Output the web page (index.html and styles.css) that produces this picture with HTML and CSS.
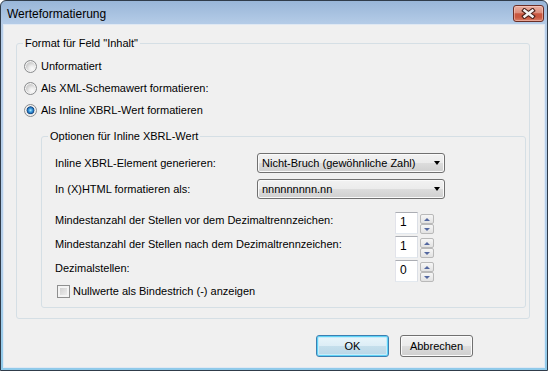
FILE: index.html
```html
<!DOCTYPE html>
<html lang="de">
<head>
<meta charset="utf-8">
<title>Werteformatierung</title>
<link rel="stylesheet" href="styles.css">
</head>
<body>
<div class="window">
  <div class="titlebar">
    <span class="title">Werteformatierung</span>
    <span class="close">
      <svg width="15" height="11" viewBox="0 0 15 11">
        <path d="M3.5 2.5 L11.5 8.5 M11.5 2.5 L3.5 8.5" stroke="#4a2119" stroke-width="4.6" stroke-linecap="square" fill="none"/>
        <path d="M3.5 2.5 L11.5 8.5 M11.5 2.5 L3.5 8.5" stroke="#f4f4f4" stroke-width="2.4" stroke-linecap="square" fill="none"/>
      </svg>
    </span>
  </div>
  <div class="client">
    <div class="group outer">
      <div class="legend">Format für Feld "Inhalt"</div>
      <div class="radios">
        <div class="radio-row"><span class="radio"></span><span>Unformatiert</span></div>
        <div class="radio-row"><span class="radio"></span><span>Als XML-Schemawert formatieren:</span></div>
        <div class="radio-row"><span class="radio checked"></span><span>Als Inline XBRL-Wert formatieren</span></div>
      </div>
      <div class="group inner">
        <div class="legend">Optionen für Inline XBRL-Wert</div>
        <div class="combo-rows">
          <div class="field-label">Inline XBRL-Element generieren:</div>
          <div class="combo"><span>Nicht-Bruch (gewöhnliche Zahl)</span><span class="arrow"></span></div>
          <div class="field-label">In (X)HTML formatieren als:</div>
          <div class="combo"><span>nnnnnnnnn.nn</span><span class="arrow"></span></div>
        </div>
        <div class="spin-rows">
          <div class="spin-label">Mindestanzahl der Stellen vor dem Dezimaltrennzeichen:</div>
          <div class="edit">1</div>
          <div class="spin"><span class="spin-btn up"></span><span class="spin-btn down"></span></div>
          <div class="spin-label">Mindestanzahl der Stellen nach dem Dezimaltrennzeichen:</div>
          <div class="edit">1</div>
          <div class="spin"><span class="spin-btn up"></span><span class="spin-btn down"></span></div>
          <div class="spin-label">Dezimalstellen:</div>
          <div class="edit">0</div>
          <div class="spin"><span class="spin-btn up"></span><span class="spin-btn down"></span></div>
        </div>
        <div class="check-row"><span class="checkbox"></span><span>Nullwerte als Bindestrich (-) anzeigen</span></div>
      </div>
    </div>
    <div class="buttons">
      <div class="btn default">OK</div>
      <div class="btn">Abbrechen</div>
    </div>
  </div>
</div>
</body>
</html>
```

FILE: styles.css
```css
* { box-sizing: border-box; }
html, body { margin: 0; padding: 0; }
body {
  width: 548px;
  height: 371px;
  overflow: hidden;
  background: #ffffff;
  font-family: "Liberation Sans", Arial, sans-serif;
  font-size: 11px;
  color: #000;
}
.window {
  width: 548px;
  height: 371px;
  border: 1px solid #303c4a;
  border-radius: 6px 6px 0 0;
  padding: 0 3px 3px;
  background: linear-gradient(#99b6d8 0, #b6cde8 24px, #b5cfea 70%, #8fcaea 100%);
  display: flex;
  flex-direction: column;
}
.titlebar {
  height: 24px;
  display: flex;
  justify-content: space-between;
  padding-left: 3px;
}
.title {
  font-size: 12px;
  line-height: 14px;
  padding-top: 6px;
}
.close {
  width: 31px;
  height: 17px;
  margin-top: 4px;
  border: 1px solid #6a2e26;
  border-radius: 3px;
  background: linear-gradient(#eab0a2 0, #dc8e7c 45%, #c9563f 52%, #c9583f 75%, #d9806a 100%);
  box-shadow: inset 0 0 0 1px rgba(255, 220, 210, 0.45);
  display: flex;
  align-items: center;
  justify-content: center;
}
.client {
  flex: 1;
  background: #f0f0f0;
  box-shadow: 0 0 0 1px #dfe8f3;
  padding: 18px 0 0 12px;
}
.group {
  border: 1px solid #d5dfe5;
  border-radius: 3px;
}
.outer {
  width: 514px;
  height: 276px;
}
.legend {
  width: fit-content;
  height: 13px;
  line-height: 13px;
  margin: -7px 0 0 6px;
  padding: 0 2px;
  background: #f0f0f0;
}
.radios {
  margin-top: 5px;
}
.radio-row {
  height: 22px;
  display: flex;
  align-items: center;
  gap: 4px;
  padding-left: 7px;
  line-height: 13px;
}
.radio {
  width: 13px;
  height: 13px;
  border-radius: 50%;
  border: 1px solid #8a8c8e;
  background: radial-gradient(circle at 65% 70%, #fbfbfb 0, #ececec 3px, #cfcfcf 6px);
  box-shadow: inset 0 0 0 1px #f4f4f4;
}
.radio.checked {
  background: radial-gradient(circle at 50% 48%, #b5ecff 0, #49a8e6 1.5px, #1e66ad 3px, #0f3f78 3.6px, #d9d9d9 4.2px, #f3f3f3 6px);
}
.inner {
  width: 485px;
  height: 172px;
  margin: 15px 0 0 24px;
}
.combo-rows {
  margin-top: 10px;
  padding-left: 13px;
  display: grid;
  grid-template-columns: 202px 188px;
  grid-auto-rows: 20px;
  row-gap: 6px;
  align-items: center;
}
.field-label {
  line-height: 13px;
}
.combo {
  height: 20px;
  border: 1px solid #707070;
  border-radius: 3px;
  background: linear-gradient(#f2f2f2 0, #ebebeb 50%, #dddddd 50%, #cfcfcf 100%);
  box-shadow: inset 0 0 0 1px #fafafa;
  display: flex;
  align-items: center;
  justify-content: space-between;
  padding: 0 4px 0 4px;
  line-height: 13px;
}
.arrow {
  width: 0;
  height: 0;
  border-left: 3.5px solid transparent;
  border-right: 3.5px solid transparent;
  border-top: 4px solid #000;
}
.spin-rows {
  margin-top: 13px;
  padding-left: 13px;
  display: grid;
  grid-template-columns: 338px 23px 14px;
  grid-auto-rows: 24px;
  column-gap: 2px;
  align-items: start;
}
.spin-label {
  line-height: 13px;
  margin-top: 2px;
}
.edit {
  width: 23px;
  height: 22px;
  background: #fff;
  border: 1px solid;
  border-color: #abadb3 #dbdfe6 #e3e9ef #e2e3ea;
  padding-left: 4px;
  line-height: 19px;
  font-size: 12px;
}
.spin {
  margin-top: 2px;
  display: flex;
  flex-direction: column;
}
.spin-btn {
  width: 14px;
  height: 10px;
  border: 1px solid #b9b9b9;
  border-radius: 2px;
  background: linear-gradient(#f6f6f6, #e2e2e2);
  display: flex;
  align-items: center;
  justify-content: center;
}
.spin-btn::after {
  content: "";
  width: 0;
  height: 0;
  border-left: 3px solid transparent;
  border-right: 3px solid transparent;
}
.spin-btn.up::after { border-bottom: 3px solid #5468a0; }
.spin-btn.down::after { border-top: 3px solid #5468a0; }
.check-row {
  margin-top: 1px;
  padding-left: 15px;
  display: flex;
  align-items: center;
  gap: 3px;
  height: 13px;
  line-height: 13px;
}
.checkbox {
  width: 13px;
  height: 13px;
  border: 1px solid #8e8f8f;
  background: linear-gradient(135deg, #c9c9c9, #f4f4f4);
  box-shadow: inset 0 0 0 2px #f4f4f4;
}
.buttons {
  margin-top: 16px;
  padding-right: 71px;
  display: flex;
  justify-content: flex-end;
  gap: 11px;
}
.btn {
  width: 73px;
  height: 22px;
  border: 1px solid #707070;
  border-radius: 3px;
  background: linear-gradient(#f2f2f2 0, #ebebeb 50%, #dddddd 50%, #cfcfcf 100%);
  box-shadow: inset 0 0 0 1px #fbfbfb;
  display: flex;
  align-items: center;
  justify-content: center;
  font-size: 11px;
  line-height: 13px;
}
.btn.default {
  border-color: #3c7fb1;
  background: linear-gradient(#eaf6fb 0, #dcedf6 50%, #c5dfec 50%, #b8d6e6 100%);
  box-shadow: inset 0 0 0 1px #5fd3f7, inset 0 0 0 2px #c7ecfa;
}
```
